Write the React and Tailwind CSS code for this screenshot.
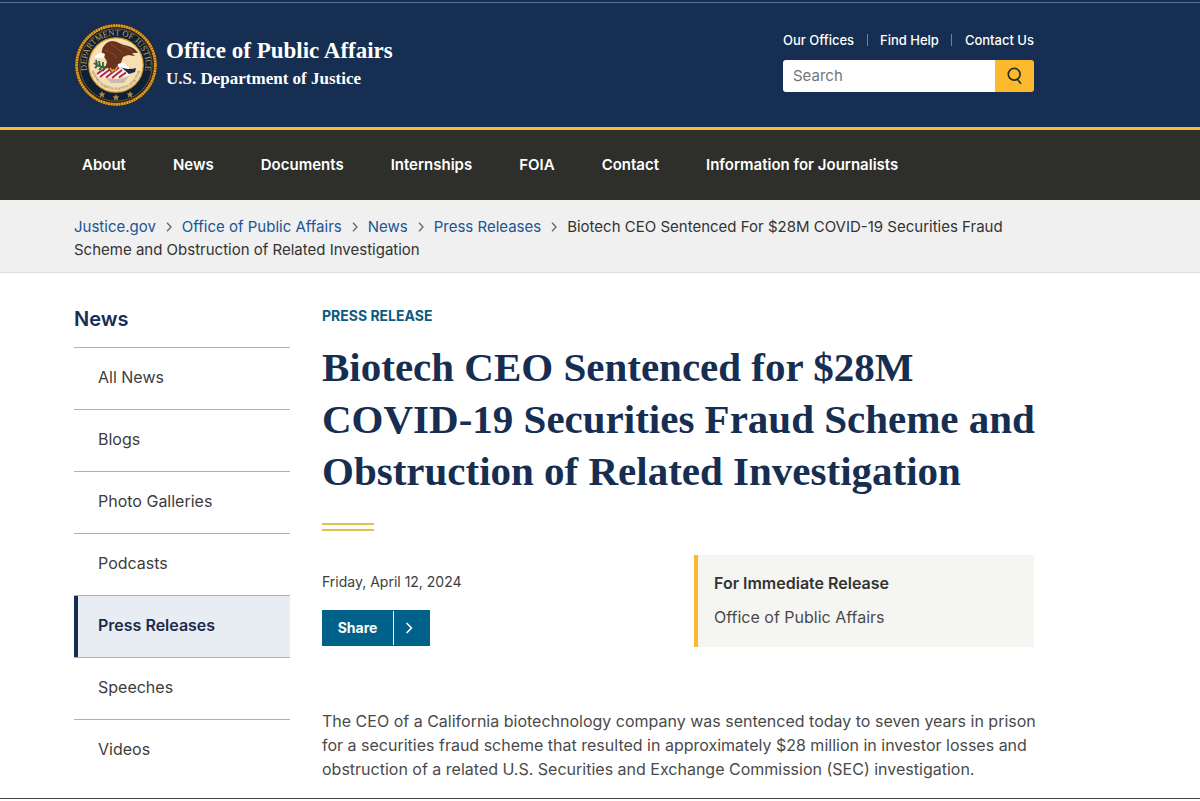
import { Fragment } from "react";

const headerLinks = ["Our Offices", "Find Help", "Contact Us"];

const navItems = [
  "About",
  "News",
  "Documents",
  "Internships",
  "FOIA",
  "Contact",
  "Information for Journalists",
];

const crumbs = ["Justice.gov", "Office of Public Affairs", "News", "Press Releases"];

const sideItems = [
  "All News",
  "Blogs",
  "Photo Galleries",
  "Podcasts",
  "Press Releases",
  "Speeches",
  "Videos",
];

/* === Department seal === */
function Seal() {
  return (
    <svg viewBox="0 0 84 84" className="size-[84px] shrink-0" role="img" aria-label="Department of Justice seal">
      <defs>
        <path id="ring-top" d="M15.1 54 A29.5 29.5 0 1 1 68.9 54" />
        <path id="ring-motto" d="M17.5 37 A25 25 0 1 0 66.5 37" />
      </defs>
      {/* rope border */}
      <circle cx="42" cy="42" r="41.5" fill="#3b2a14" />
      <circle cx="42" cy="42" r="39.3" fill="none" stroke="#7d5314" strokeWidth="2.8" />
      <circle cx="42" cy="42" r="39.3" fill="none" stroke="#e2a02a" strokeWidth="2.8" strokeDasharray="1.9 0.7" />
      <circle cx="42" cy="42" r="37.3" fill="#0d2036" stroke="#2e2613" strokeWidth="1" />
      <circle cx="42" cy="42" r="36.2" fill="none" stroke="#a27b2c" strokeWidth="0.6" />
      <circle cx="42" cy="42" r="27.2" fill="#f7dfb3" stroke="#d99b28" strokeWidth="1.2" />
      <text fill="#c3a35c" fontSize="8.5" fontFamily="Liberation Serif, serif">
        <textPath href="#ring-top" startOffset="50%" textAnchor="middle">
          DEPARTMENT OF JUSTICE
        </textPath>
      </text>
      {/* shield with stripes */}
      <path d="M31 54c5 3 16 3 24-1l-5 7H37Z" fill="#cbbab2" />
      <path d="M22 50 L33 43 L48 42 L56 50 L54 53 L43 55 L24 54Z" fill="#f4eeee" />
      <path
        d="M23 51l10-7M26 54l13-10M32 54.5l13-10M38 55l10-8M45 54.5l7-5"
        stroke="#b51f3e"
        strokeWidth="1.8"
      />
      <path d="M47 44 L58 46 L62 45 L61 49 L55 51Z" fill="#14294a" />
      <path d="M43 38c5 0 10 4 13 8-6 0-10-2-13-4Z" fill="#fff" />
      {/* olive branch */}
      <path
        d="M20 40c4 3 8 5 14 4M23 41l-1-4M26 43l-1-5M29 44l0-5M24 42l-3 3M28 44l-3 3M31 44l-2 4"
        fill="none"
        stroke="#2c6848"
        strokeWidth="1.8"
      />
      {/* eagle */}
      <path
        d="M28 31c-1-6 3-12 10-13 5 0 8 3 12 4 6 1 11 3 14 8l-6 0 3 3-7-1-5 2-2 6-3 1-1 7-4-2-2 4-3-5-3 0 2-6-2-4-3-2Z"
        fill="#67331c"
      />
      <path d="M31 27c5 2 9 4 12 8M47 23c5 1 9 3 12 6M37 21l12 9" stroke="#8d5129" strokeWidth="0.9" fill="none" />
      <path d="M21 33c3-3 7-4 10-2l-1 4c-3 0-5-1-9 0Z" fill="#fff" />
      <path d="M36 45l3 4M43 44l-2 4" stroke="#e0a52c" strokeWidth="1.6" />
      <text fill="#6c5a44" fontSize="3.7" fontFamily="Liberation Serif, serif">
        <textPath href="#ring-motto" startOffset="50%" textAnchor="middle">
          QUI PRO DOMINA JUSTITIA SEQUITUR
        </textPath>
      </text>
      {/* stars */}
      <g fill="#b3883c">
        <path d="M28 68l1 2.2 2.4.2-1.8 1.6.5 2.4-2.1-1.2-2.1 1.2.5-2.4-1.8-1.6 2.4-.2Z" />
        <path d="M42 71l1 2.2 2.4.2-1.8 1.6.5 2.4-2.1-1.2-2.1 1.2.5-2.4-1.8-1.6 2.4-.2Z" />
        <path d="M56 68l1 2.2 2.4.2-1.8 1.6.5 2.4-2.1-1.2-2.1 1.2.5-2.4-1.8-1.6 2.4-.2Z" />
      </g>
    </svg>
  );
}

/* === Blue header with search === */
function Header() {
  return (
    <header className="border-b-3 border-[#fdb92e] bg-[#162e51] pt-0.5">
      <div className="border-t border-[#56709a]" />
      <div className="ml-[74px] flex h-31 max-w-[960px] items-start justify-between">
        <a href="#home" className="flex items-center gap-2 pt-5 text-white">
          <Seal />
          <span className="font-['Liberation_Serif',serif] font-bold">
            <span className="block text-[23px] leading-7">Office of Public Affairs</span>
            <span className="block text-[17px] leading-7">U.S. Department of Justice</span>
          </span>
        </a>
        <div className="w-[251px] pt-[27px]">
          <ul className="flex justify-between text-[13px] leading-5 font-medium text-white">
            {headerLinks.map((label, i) => (
              <Fragment key={label}>
                {i > 0 && <li aria-hidden="true" className="my-1 w-px bg-[#6d809d]" />}
                <li>
                  <a href="#link">{label}</a>
                </li>
              </Fragment>
            ))}
          </ul>
          <form className="mt-2.5 flex h-8 overflow-hidden rounded-[3px]" onSubmit={(e) => e.preventDefault()}>
            <input
              type="search"
              aria-label="Search"
              placeholder="Search"
              className="min-w-0 flex-1 bg-white px-2.5 text-[15px] placeholder:text-[#757575]"
            />
            <button type="submit" aria-label="Submit search" className="flex w-[39px] items-center justify-center bg-[#fdb92e]">
              <svg viewBox="0 0 16 18" className="h-[18px] w-4" fill="none" stroke="#2e2e2a" strokeWidth="1.7">
                <circle cx="7.2" cy="7.3" r="5.9" />
                <path d="M10 11.8l4 5" />
              </svg>
            </button>
          </form>
        </div>
      </div>
    </header>
  );
}

function MainNav() {
  return (
    <nav aria-label="Main" className="bg-[#2e2e2a]">
      <ul className="ml-[82px] flex h-[70px] items-center gap-[47px] text-[15px] font-semibold text-white">
        {navItems.map((item) => (
          <li key={item}>
            <a href="#section">{item}</a>
          </li>
        ))}
      </ul>
    </nav>
  );
}

function Chevron({ className }) {
  return (
    <svg viewBox="0 0 6 10" className={className} fill="none" stroke="currentColor" strokeWidth="1.3" aria-hidden="true">
      <path d="M1 .8l4 4.2-4 4.2" />
    </svg>
  );
}

function Breadcrumbs() {
  return (
    <nav aria-label="Breadcrumb" className="border-b border-[#dcdee0] bg-[#f0f0f0]">
      <p className="ml-[74px] max-w-[960px] pt-[15px] pb-[11px] text-[15px] leading-[23px] text-[#333]">
        {crumbs.map((crumb) => (
          <Fragment key={crumb}>
            <a href="#crumb" className="text-[#205493]">
              {crumb}
            </a>
            <Chevron className="mx-2.5 inline h-2.5 w-1.5 align-baseline text-[#666]" />
          </Fragment>
        ))}
        <span>Biotech CEO Sentenced For $28M COVID-19 Securities Fraud </span>
        <span>Scheme and Obstruction of Related Investigation</span>
      </p>
    </nav>
  );
}

function SideNav() {
  return (
    <aside className="w-[216px] shrink-0 pt-8">
      <h2 className="text-xl leading-7 font-semibold text-[#162e51]">News</h2>
      <ul className="mt-3.5">
        {sideItems.map((item) => {
          const active = item === "Press Releases";
          return (
            <li key={item} className="border-t border-[#adb1b5]">
              <a
                href="#item"
                aria-current={active ? "page" : undefined}
                className={
                  active
                    ? "flex h-[61px] items-center border-l-4 border-[#162e51] bg-[#e8edf4] pb-1 pl-5 text-base font-semibold text-[#1b2b4b]"
                    : "flex h-[61px] items-center pb-1 pl-6 text-base text-[#3d3d3d]"
                }
              >
                {item}
              </a>
            </li>
          );
        })}
      </ul>
    </aside>
  );
}

function Article() {
  return (
    <main className="min-w-0 flex-1 pt-[31px]">
      <p className="text-sm leading-6 font-bold text-[#0b5a82]">PRESS RELEASE</p>
      <h1 className="mt-[13px] -mr-4 font-['Liberation_Serif',serif] text-[41px] leading-[52px] font-bold text-[#162e51]">
        Biotech CEO Sentenced for $28M COVID-19 Securities Fraud Scheme and Obstruction of Related
        Investigation
      </h1>
      <div className="mt-[26px] h-2 w-13 border-y-2 border-[#dcc44f]" />

      <div className="mt-6 flex items-start justify-between">
        <div className="pt-[17px]">
          <p className="text-sm leading-5 text-[#3d3d3d]">Friday, April 12, 2024</p>
          <button className="mt-[18px] flex h-9 items-center bg-[#00628b] text-sm font-bold text-white">
            <span className="w-[71px]">Share</span>
            <span className="my-px flex w-[37px] items-center self-stretch border-l border-white pl-[11px]">
              <Chevron className="h-3 w-2" />
            </span>
          </button>
        </div>
        <div className="h-[92px] w-[340px] border-l-4 border-[#fdb92e] bg-[#f5f6f2] px-4 pt-4 text-base leading-6">
          <p className="font-semibold text-[#333]">For Immediate Release</p>
          <p className="mt-2.5 text-[#4a4a4a]">Office of Public Affairs</p>
        </div>
      </div>

      <p className="mt-[62px] -mr-4 text-base leading-6 text-[#4a4a4a]">
        The CEO of a California biotechnology company was sentenced today to seven years in prison
        for a securities fraud scheme that resulted in approximately $28 million in investor losses
        and obstruction of a related U.S. Securities and Exchange Commission (SEC) investigation.
      </p>
    </main>
  );
}

export default function App() {
  return (
    <div className="min-h-screen bg-white font-['Inter',sans-serif]">
      <Header />
      <MainNav />
      <Breadcrumbs />
      <div className="ml-[74px] flex max-w-[960px] gap-8 pb-[17px]">
        <SideNav />
        <Article />
      </div>
      <div className="border-t border-[#3f4247]" />
    </div>
  );
}
